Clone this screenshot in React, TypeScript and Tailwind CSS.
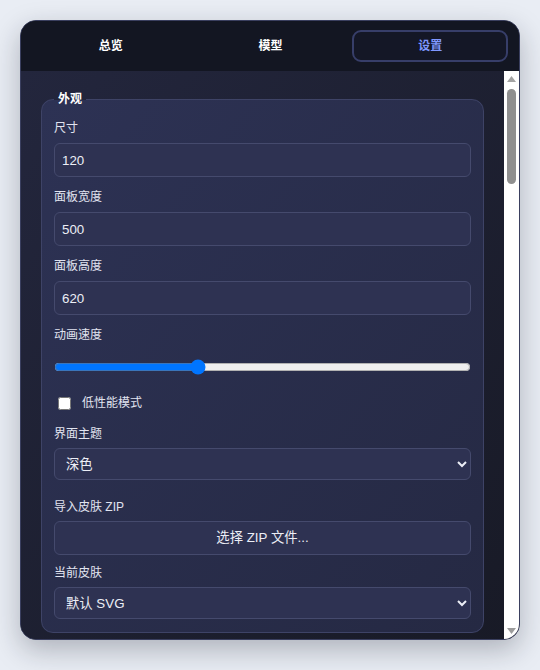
import { useState } from "react";

type Row = { label: string; value: string; kind: "input" | "select" };

const extraSections: { title: string; rows: Row[] }[] = [
  {
    title: "行为",
    rows: [
      { label: "空闲动画间隔（秒）", value: "30", kind: "input" },
      { label: "鼠标跟随", value: "开启", kind: "select" },
      { label: "置顶显示", value: "是", kind: "select" },
      { label: "开机自启", value: "否", kind: "select" },
      { label: "气泡显示时长（秒）", value: "5", kind: "input" },
      { label: "点击反应", value: "随机", kind: "select" },
      { label: "拖动灵敏度", value: "1.0", kind: "input" },
    ],
  },
  {
    title: "模型",
    rows: [
      { label: "模型路径", value: "default", kind: "input" },
      { label: "缩放比例", value: "1.0", kind: "input" },
      { label: "水平偏移", value: "0", kind: "input" },
      { label: "垂直偏移", value: "0", kind: "input" },
      { label: "纹理质量", value: "高", kind: "select" },
      { label: "物理模拟", value: "开启", kind: "select" },
      { label: "表情切换", value: "自动", kind: "select" },
    ],
  },
  {
    title: "对话",
    rows: [
      { label: "接口地址", value: "http://localhost:8080", kind: "input" },
      { label: "API 密钥", value: "", kind: "input" },
      { label: "模型名称", value: "gpt-4o-mini", kind: "input" },
      { label: "温度", value: "0.7", kind: "input" },
      { label: "最大长度", value: "512", kind: "input" },
      { label: "上下文条数", value: "10", kind: "input" },
      { label: "系统提示词", value: "你是一个可爱的桌面助手。", kind: "input" },
    ],
  },
  {
    title: "语音",
    rows: [
      { label: "启用语音", value: "否", kind: "select" },
      { label: "音色", value: "默认", kind: "select" },
      { label: "音量", value: "80", kind: "input" },
      { label: "语速", value: "1.0", kind: "input" },
      { label: "音调", value: "1.0", kind: "input" },
      { label: "唤醒词", value: "你好", kind: "input" },
      { label: "识别语言", value: "中文", kind: "select" },
    ],
  },
  {
    title: "高级",
    rows: [
      { label: "日志级别", value: "info", kind: "select" },
      { label: "帧率上限", value: "60", kind: "input" },
      { label: "硬件加速", value: "开启", kind: "select" },
      { label: "缓存目录", value: "./cache", kind: "input" },
      { label: "调试模式", value: "否", kind: "select" },
      { label: "配置文件", value: "config.json", kind: "input" },
      { label: "版本", value: "1.0.0", kind: "input" },
    ],
  },
];

const inputCls =
  "block w-full h-[34px] rounded-[6px] border border-[#454a6d] bg-[#2e3252] pl-[7px] text-[13.333px] text-[#eceef6] outline-none";
const selectCls =
  "block w-full h-[32px] rounded-[6px] border border-[#454a6d] bg-[#2e3252] pl-[7px] pr-1 text-[13.333px] text-[#eceef6] outline-none";
const labelCls = "block text-xs leading-4 text-[#e1e4f0]";
const fieldsetCls =
  "rounded-xl border border-[#3e4366] bg-gradient-to-br from-[#2d3254] to-[#252943] px-3 pt-[13px] pb-[13px]";
const legendCls = "px-1 text-xs leading-4 font-bold text-white";

function Field({ row }: { row: Row }) {
  return (
    <div>
      <label className={labelCls}>{row.label}</label>
      {row.kind === "input" ? (
        <input className={`${inputCls} mt-[7px]`} defaultValue={row.value} />
      ) : (
        <select className={`${selectCls} mt-[7px]`} defaultValue={row.value}>
          <option>{row.value}</option>
        </select>
      )}
    </div>
  );
}

// classic scrollbar look: white track, grey pill thumb, triangle arrows
function ScrollBar() {
  return (
    <div className="flex w-[15px] shrink-0 flex-col bg-white">
      <svg width="15" height="15" viewBox="0 0 15 15" className="shrink-0">
        <polygon points="3,11 7.5,5 12,11" fill="#a3a3a3" />
      </svg>
      <div className="flex-1 px-[3px] pt-[3px]">
        <div className="h-[95px] rounded-full bg-[#8f8f8f]" />
      </div>
      <svg width="15" height="15" viewBox="0 0 15 15" className="shrink-0">
        <polygon points="3,4 12,4 7.5,10" fill="#9c9c9c" />
      </svg>
    </div>
  );
}

export default function App() {
  const [tab, setTab] = useState("设置");
  const [speed, setSpeed] = useState(34);
  const tabs = ["总览", "模型", "设置"];

  return (
    <div className="min-h-screen bg-[#e9edf4] pt-5 font-[family-name:'Liberation_Sans','Noto_Sans_CJK_SC',sans-serif]">
      <div className="mx-auto flex h-[620px] w-[500px] flex-col overflow-hidden rounded-2xl border border-[#3a3f5f] bg-[#131622] shadow-[0_10px_28px_rgba(20,24,40,0.28)]">
        <div className="grid grid-cols-3 gap-1 bg-[#131622] pl-3 pr-[11px] py-[9px]">
          {tabs.map((t) => (
            <button
              key={t}
              onClick={() => setTab(t)}
              className={
                t === tab
                  ? "h-[32px] rounded-[9px] border-2 border-[#373e69] bg-[#141726] text-xs font-bold text-[#7f97ff]"
                  : "h-[32px] rounded-[9px] border-2 border-transparent text-xs font-bold text-white"
              }
            >
              {t}
            </button>
          ))}
        </div>

        <div className="flex min-h-0 flex-1 bg-gradient-to-br from-[#23263d] to-[#181a26]">
          <div className="min-w-0 flex-1 overflow-y-auto px-5 pt-5 pb-5 [scrollbar-width:none]">
            <fieldset className={fieldsetCls}>
              <legend className={legendCls}>外观</legend>

              <label className={labelCls}>尺寸</label>
              <input className={`${inputCls} mt-[7px]`} defaultValue="120" />

              <label className={`${labelCls} mt-3`}>面板宽度</label>
              <input className={`${inputCls} mt-[7px]`} defaultValue="500" />

              <label className={`${labelCls} mt-3`}>面板高度</label>
              <input className={`${inputCls} mt-[7px]`} defaultValue="620" />

              <label className={`${labelCls} mt-3`}>动画速度</label>
              <input
                type="range"
                min={0}
                max={100}
                value={speed}
                onChange={(e) => setSpeed(Number(e.target.value))}
                className="mt-[16px] block h-4 w-full"
              />

              <label className="mt-[20px] flex h-4 items-center gap-[11px] text-xs text-[#e1e4f0]">
                <input type="checkbox" className="ml-1 h-[13px] w-[13px]" />
                低性能模式
              </label>

              <label className={`${labelCls} mt-[15px]`}>界面主题</label>
              <select className={`${selectCls} mt-[6px]`} defaultValue="深色">
                <option>深色</option>
                <option>浅色</option>
              </select>

              <label className={`${labelCls} mt-[19px]`}>导入皮肤 ZIP</label>
              <button className="mt-[6px] block h-[34px] w-full rounded-[6px] border border-[#454a6d] bg-[#2e3252] text-[13.333px] text-[#eceef6]">
                选择 ZIP 文件...
              </button>

              <label className={`${labelCls} mt-[10px]`}>当前皮肤</label>
              <select className={`${selectCls} mt-[6px]`} defaultValue="默认 SVG">
                <option>默认 SVG</option>
              </select>
            </fieldset>

            {extraSections.map((s) => (
              <fieldset key={s.title} className={`${fieldsetCls} mt-4`}>
                <legend className={legendCls}>{s.title}</legend>
                <div className="flex flex-col gap-3">
                  {s.rows.map((r) => (
                    <Field key={r.label} row={r} />
                  ))}
                </div>
              </fieldset>
            ))}
          </div>
          <ScrollBar />
        </div>
      </div>
    </div>
  );
}
